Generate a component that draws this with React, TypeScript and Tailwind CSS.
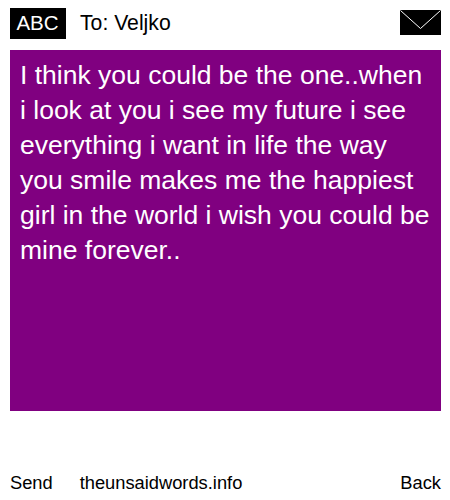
export default function App() {
  return (
    <div className="flex h-[500px] w-[450px] flex-col bg-white font-['Liberation_Sans',Arial,sans-serif] text-black">
      <header className="flex h-[50px] items-start pl-[10px] pr-[9px] pt-2">
        <div className="flex h-[31px] w-14 items-center justify-center bg-black pr-[1px] text-[20.5px] text-white">
          ABC
        </div>
        <span className="ml-[14px] mt-[3px] text-[21.2px] leading-[24px]">To: Veljko</span>
        <svg className="ml-auto mt-[2px]" width="41" height="25" viewBox="0 0 41 25">
          <rect width="41" height="25" fill="#000" />
          <path d="M0.5 0.5 L20.5 18.5 L40.5 0.5" fill="none" stroke="#fff" strokeWidth="1" />
        </svg>
      </header>

      <main className="mx-[10px] mr-[9px] h-[361px] bg-[#800080] px-[10px] pt-[8px] text-[26.5px] leading-[35px] text-white">
        I think you could be the one..when i look at you i see my future i see everything i want in life the way you smile makes me the happiest girl in the world i wish you could be mine forever..
      </main>

      <footer className="mt-[61px] flex items-center justify-between pl-[10px] pr-[9px] text-[18.3px] leading-[22px]">
        <span>Send</span>
        <span className="ml-[27px] mr-auto">theunsaidwords.info</span>
        <span>Back</span>
      </footer>
    </div>
  );
}
